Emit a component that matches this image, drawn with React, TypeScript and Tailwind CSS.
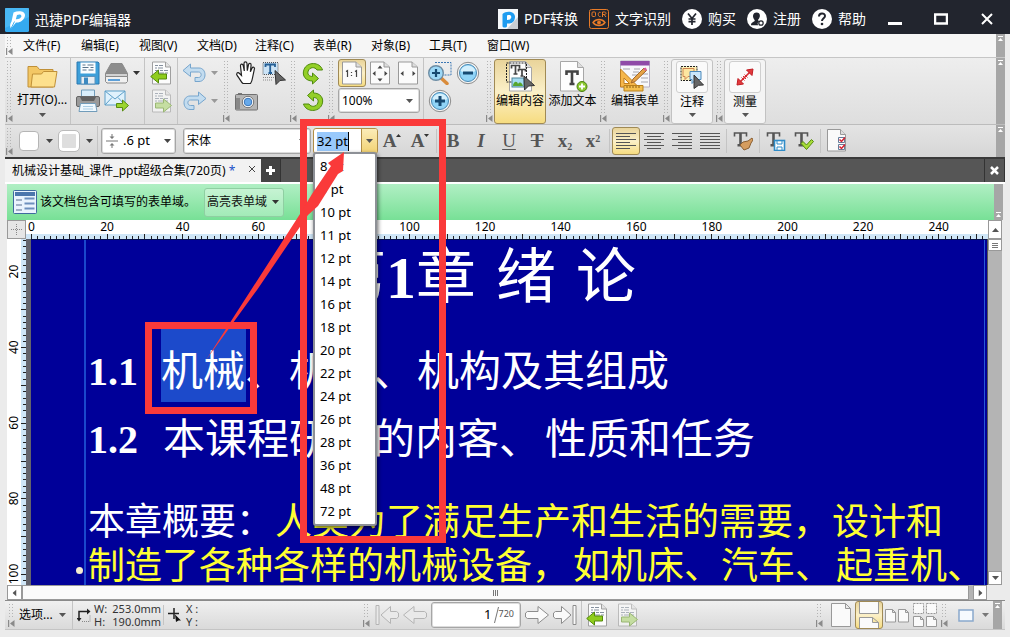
import { useState } from "react";
import type { ReactNode } from "react";
import clsx from "clsx";

const menus = ["文件(F)", "编辑(E)", "视图(V)", "文档(D)", "注释(C)", "表单(R)", "对象(B)", "工具(T)", "窗口(W)"];
const fontSizes = [8, 9, 10, 11, 12, 14, 16, 18, 20, 22, 24, 26, 28, 36, 48, 72];

const active = "border border-[#a08a55] rounded-[3px] bg-gradient-to-b from-[#e9d49a] via-[#fbf0c8] to-[#f6dc80]";
const box = "rounded-[3px] border border-[#a6a6a6] bg-white shadow-[inset_0_0_0_1px_#dcdcdc]";

/* ---------- small parts ---------- */

function Caret({ className }: { className?: string }) {
  return (
    <svg width="7" height="4" viewBox="0 0 7 4" className={clsx("shrink-0", className)}>
      <path d="M0 0h7L3.5 4z" fill="currentColor" />
    </svg>
  );
}

function Grip() {
  return (
    <div className="flex w-[9px] shrink-0 flex-col items-center self-stretch pt-0.5 text-[#8a8a8a]">
      <div className="w-[7px] flex-1 bg-[radial-gradient(#b4b4b4_1px,transparent_1px)] bg-[size:3px_3px]" />
      <svg width="7" height="7" viewBox="0 0 7 7" className="mb-0.5 mt-px shrink-0">
        <path d="M0 0h1.2v7H0zM6.5 0v7L2 3.5z" fill="currentColor" />
      </svg>
    </div>
  );
}

function Sep() {
  return <div className="w-px shrink-0 self-stretch bg-[#c4c4c4]" />;
}

function Scroller({ up = true }: { up?: boolean }) {
  return (
    <div className={clsx("flex w-[9px] shrink-0 justify-center self-stretch bg-[#a6a6a6]", up ? "items-start pt-0.5" : "items-end pb-0.5")}>
      <svg width="5" height="6" viewBox="0 0 5 6">
        <path d="M0 0h5v1H0zM0 5h5L2.5 2z" fill="#fff" />
      </svg>
    </div>
  );
}

function IconButton({ label, children, className }: { label: string; children: ReactNode; className?: string }) {
  return (
    <button aria-label={label} className={clsx("flex shrink-0 items-center justify-center", className)}>
      {children}
    </button>
  );
}

/* ---------- icons ---------- */

function LogoIcon() {
  return (
    <svg width="24" height="24" viewBox="0 0 24 24">
      <rect width="24" height="24" rx="1.5" fill="#35aaf0" />
      <path d="M0 0h24v9L0 20z" fill="#52bdf6" opacity=".7" />
      <path d="M8.500 4.500c5-2.500 12-1.500 11.500 3s-5 7.500-9 7L6 20.500c-1.500-2-1-4.500.500-7z" fill="#fff" />
      <path d="M12 7c2.500-1 4.500-.5 4.300 1.200s-2.600 3.300-5.500 3.100z" fill="#45b4f3" />
      <path d="M6 20.500l3.500-7" stroke="#45b4f3" />
    </svg>
  );
}

function ConvertIcon() {
  return (
    <svg width="20" height="20" viewBox="0 0 20 20">
      <rect width="20" height="20" fill="#f6f8fa" />
      <path d="M20 8v12H9z" fill="#c9ced4" />
      <path d="M4.500 5c4-4 13-3 12.500 3.500C16.500 14 12 15 9 14.500V17c0 2-4.500 2-4.500 0z" fill="#1f9cf0" />
      <path d="M9 6.500c2.500-1 4.500-.2 4.200 1.700S11.500 11 9 11z" fill="#fff" />
    </svg>
  );
}

function OcrIcon() {
  return (
    <svg width="20" height="20" viewBox="0 0 20 20" fill="none" stroke="#e87b28">
      <rect x=".5" y=".5" width="19" height="19" rx="2" />
      <rect x="3" y="3" width="3.500" height="4.500" rx="1" />
      <path d="M11.500 3.500c-3-1.500-3 5 0 4M13.500 8V3h2c2 0 2 2.500 0 2.500h-2 1.500L17 8" />
      <path d="M4 13.500c3-4 9-4 12 0-3 4-9 4-12 0z" strokeWidth="1.400" />
      <circle cx="10" cy="13.500" r="1.500" fill="#e87b28" />
    </svg>
  );
}

function CoinIcon() {
  return (
    <svg width="20" height="20" viewBox="0 0 20 20">
      <circle cx="10" cy="10" r="10" fill="#fff" />
      <path d="M6 4.500l4 5 4-5M10 9.500V16M6.500 10h7M6.500 12.700h7" stroke="#22252e" strokeWidth="1.700" fill="none" />
    </svg>
  );
}

function UserIcon() {
  return (
    <svg width="20" height="20" viewBox="0 0 20 20">
      <circle cx="10" cy="10" r="10" fill="#fff" />
      <path d="M9.500 3.500c4.500 0 4 5 1.700 7-.4 1 .3 1.200 1 1.700-2 1.500-1.700 2.800-1 4H4c0-3.500 3.500-3 3.800-5C5 8.500 5.500 3.500 9.500 3.500z" fill="#22252e" />
      <circle cx="14" cy="14" r="2.200" fill="#fff" stroke="#22252e" strokeWidth="1.300" />
    </svg>
  );
}

function HelpIcon() {
  return (
    <svg width="20" height="20" viewBox="0 0 20 20">
      <circle cx="10" cy="10" r="10" fill="#fff" />
      <path d="M7 7.500c0-4 6-4 6-.5 0 2.200-3 2.300-3 5" stroke="#22252e" strokeWidth="2" fill="none" />
      <circle cx="10" cy="15" r="1.300" fill="#22252e" />
    </svg>
  );
}

function FolderIcon() {
  return (
    <svg width="32" height="26" viewBox="0 0 32 26" stroke="#c09038" strokeLinejoin="round">
      <path d="M2 24V3.500h9l2.500 3H27V24z" fill="#f3c765" />
      <path d="M5 24l1.500-13h9l2-2.500H31L28.500 24z" fill="#fde08d" />
    </svg>
  );
}

function SaveIcon() {
  return (
    <svg width="24" height="24" viewBox="0 0 24 24">
      <path d="M1 1h21l1 1v21H1z" fill="#3d9fd9" stroke="#2b78b0" />
      <rect x="4.500" y="1.500" width="15" height="11" fill="#fafdff" />
      <path d="M6.500 4h3m2 0h6M6.500 6.500h6m2 0h3M6.500 9h4m2 0h5" stroke="#59748c" />
      <path d="M5 15.500h14V23H5z" fill="#e8edf2" stroke="#5e93bb" />
      <path d="M8 16.500h4V23H8z" fill="#3d89c0" />
    </svg>
  );
}

function ScannerIcon() {
  return (
    <svg width="25" height="22" viewBox="0 0 25 22" stroke="#8a8a8a">
      <path d="M7 1.500h11l5.500 10h-22z" fill="#8d8d8d" />
      <path d="M1.500 11.500h22v3h-22z" fill="#d2d2d2" />
      <path d="M1.500 14.500h22v5l-1.500 1.500H3l-1.500-1.500z" fill="#f0f0f0" />
      <path d="M4 18h12" stroke="#5c9fd8" strokeWidth="2" />
    </svg>
  );
}

function PrinterIcon() {
  return (
    <svg width="24" height="24" viewBox="0 0 24 24">
      <path d="M5.500 9V1h13v8" fill="#d9eefb" stroke="#719cba" />
      <rect x=".5" y="7.500" width="23" height="10" rx="1.500" fill="#9a9a9a" stroke="#666" />
      <path d="M4 8h16l-2 4H6z" fill="#616161" />
      <path d="M4.500 14.500h15l1.500 8H3z" fill="#eff8fe" stroke="#719cba" />
      <path d="M7 17.500h10M7 20h10" stroke="#a9cde4" />
    </svg>
  );
}

function MailIcon() {
  return (
    <svg width="25" height="22" viewBox="0 0 25 22">
      <path d="M1 1h20v14H1z" fill="#dff1fc" stroke="#5d9fc8" />
      <path d="M1 1l10 8 10-8M1 15l7-7.500M21 15l-7-7.500" fill="none" stroke="#5d9fc8" />
      <path d="M12.500 13.500h6v-3.500l6 5.500-6 5.500v-3.500h-6z" fill="#9bd52e" stroke="#568c11" />
    </svg>
  );
}

function PageArrowIcon({ forward, faded }: { forward?: boolean; faded?: boolean }) {
  return (
    <svg width="22" height="24" viewBox="0 0 22 24" className={faded ? "opacity-60" : undefined}>
      <path d="M2.500 1h13l5 5v17h-18z" fill="#fcfcfc" stroke="#a0a0a0" />
      <path d="M15.500 1v5h5" fill="#e2e2e2" stroke="#a0a0a0" />
      <path d="M5 4.500h3m1 0h4M5 7h2m1 0h5M5 9.500h4m1 0h3m1 0h4M5 12h2m1 0h6m1 0h3" stroke="#85909e" />
      {forward ? (
        <path d="M5.500 14h8v-4l8 6.500-8 6.500v-4h-8z" fill="#b3dc78" stroke="#6a9a2c" />
      ) : (
        <path d="M16.500 13h-8V9L.7 15.500 8.500 22v-4h8z" fill="#8fcc1c" stroke="#548a0c" />
      )}
    </svg>
  );
}

function UndoIcon({ redo }: { redo?: boolean }) {
  return (
    <svg width="25" height="20" viewBox="0 0 25 20" className={redo ? "-scale-x-100" : undefined}>
      <path d="M1 7.500L8.500 1v4H17c8 0 8 13.500 0 13.500h-4v-4h3.500c3.500 0 3.500-5.500 0-5.500h-8v4.500z" fill="#c3dcef" stroke="#76a5cd" strokeLinejoin="round" />
    </svg>
  );
}

function HandIcon() {
  return (
    <svg width="22" height="24" viewBox="0 0 22 24">
      <path
        d="M8 22.500c-2-1.500-3-4.500-5.500-7.500-2-2.500 0-4.500 2-2.500l2 2L5.500 5c-.3-2.200 2.300-2.500 2.700-.4L9.300 10 9 2.500C9 .3 11.800.3 12 2.500l.3 7.200 1.200-6c.4-2 2.800-1.500 2.600.4l-.7 6.600 1.700-3.700c.8-1.700 2.800-.7 2.300 1L17.500 17c-.3 2-1 4-2 5.500z"
        fill="#fff"
        stroke="#222"
        strokeWidth="1.200"
      />
    </svg>
  );
}

function SelectTextIcon() {
  return (
    <svg width="24" height="24" viewBox="0 0 24 24">
      <path d="M1 1.500h15v12H1z" fill="#cbe3f6" stroke="#555" strokeDasharray="1 1" />
      <path d="M3.500 6V3.500h9.500V6M8.200 3.500v8.500M6.500 12H10" fill="none" stroke="#245f96" strokeWidth="1.800" />
      <path d="M1 16.500h11M1 19h9" stroke="#888" strokeDasharray="1 1" />
      <path d="M13 9.500l10.500 9.500-5.500.500-4 4z" fill="#666" stroke="#333" />
    </svg>
  );
}

function CameraIcon() {
  return (
    <svg width="23" height="19" viewBox="0 0 23 19">
      <path d="M3 1h4v2H3z" fill="#777" />
      <rect x=".5" y="2.500" width="22" height="15.500" rx="1" fill="#b5b5b5" stroke="#707070" />
      <path d="M1 6h4v11H1z" fill="#888" />
      <circle cx="13" cy="10" r="5.700" fill="#fff" stroke="#777" />
      <circle cx="13" cy="10" r="3.800" fill="#67a9ea" stroke="#3774ba" />
    </svg>
  );
}

function RotateIcon({ flip }: { flip?: boolean }) {
  return (
    <svg width="22" height="24" viewBox="0 0 22 24" className={flip ? "-scale-y-100 -scale-x-100" : undefined}>
      <path
        d="M20.500 9C18 .5 5 .5 2 8.500c-2.500 6.500 2 11.500 8.500 11.500V23l6-5.500-6-5.500v3.500c-3.500 0-5.500-2.500-4.300-5.500C7.500 6 13 5.500 15 9z"
        fill="#93cf27"
        stroke="#4f8a0e"
        strokeLinejoin="round"
      />
    </svg>
  );
}

function ViewIcon({ kind }: { kind: "actual" | "page" | "width" }) {
  return (
    <svg width="20" height="24" viewBox="0 0 20 24">
      <path d="M.5 1h13.500l5.500 5v17H.5z" fill="#fbfbfb" stroke="#999" />
      <path d="M14 1v5h5.500" fill="#ddd" stroke="#999" />
      {kind === "actual" && <path d="M4 10.500l1.500-1V16M9.500 11v1m0 2v1M13 10.500l1.500-1V16" stroke="#444" strokeWidth="1.200" fill="none" />}
      {kind !== "actual" && <path d="M5.500 10v5L2.500 12.500zM14.500 10v5l3-2.500z" fill="#444" />}
      {kind === "page" && <path d="M7.500 7.500h5L10 4.500zM7.500 17.500h5L10 20.500z" fill="#444" />}
    </svg>
  );
}

function ZoomIcon({ kind }: { kind: "plus" | "minus" }) {
  return (
    <svg width="24" height="24" viewBox="0 0 24 24">
      <circle cx="12" cy="12" r="10.700" fill="#f4f4f4" stroke="#8c8c8c" />
      <circle cx="12" cy="12" r="8.500" fill="#90d4f7" stroke="#4689b5" />
      <path d="M4.500 10c2-7 13-7 15 0-4 2-11 2-15 0z" fill="#d4f0fd" />
      <path d={kind === "plus" ? "M7 12h10M12 7v10" : "M7 12h10"} stroke="#164a72" strokeWidth="3" />
    </svg>
  );
}

function MarqueeZoomIcon() {
  return (
    <svg width="24" height="24" viewBox="0 0 24 24">
      <path d="M7 1.500h16v12.500h-8" fill="none" stroke="#3d78b4" strokeDasharray="2 1" />
      <path d="M13 17l6 5.500" stroke="#d98c3c" strokeWidth="3.500" strokeLinecap="round" />
      <circle cx="8" cy="12" r="7.300" fill="#9cd8f7" stroke="#6c8ca3" strokeWidth="1.400" />
      <path d="M4 12h8M8 8v8" stroke="#164a72" strokeWidth="2.200" />
    </svg>
  );
}

function EditContentIcon() {
  return (
    <svg width="30" height="31" viewBox="0 0 30 31">
      <path d="M4.500.5h16l6 6V30h-22z" fill="#fdfdfd" stroke="#a7a7a7" />
      <path d="M20.500.5v6h6" fill="#ddd" stroke="#a7a7a7" />
      <path d="M1.500 2h20v19h-20z" fill="none" stroke="#222" strokeDasharray="2 1" />
      <path d="M6.500 7.500v-3h8v3M10.500 4.500V13M8.500 13h4M13.500 10.500v-2h7v2M17 8.500V15M15.500 15h3" fill="none" stroke="#444" strokeWidth="1.700" />
      <rect x="7" y="17" width="12" height="9" fill="#a4dcf2" stroke="#4e8398" />
      <path d="M8 25c0-4 4-6 5-2 2-3 4-1 5 2z" fill="#57a52c" />
      <path d="M19 15l10.500 9.500-6 .5-4 4z" fill="#666" stroke="#333" />
    </svg>
  );
}

function AddTextIcon() {
  return (
    <svg width="30" height="31" viewBox="0 0 30 31">
      <path d="M2.500.5h17l6 6V30h-23z" fill="#fdfdfd" stroke="#a7a7a7" />
      <path d="M19.500.5v6h6" fill="#ddd" stroke="#a7a7a7" />
      <path d="M8.500 14v-3.500h11V14M14 10.500V23M11.500 23h5" fill="none" stroke="#444" strokeWidth="2.600" />
      <circle cx="24" cy="25.500" r="5" fill="#8bc82e" stroke="#4b810f" />
      <path d="M21 25.500h6M24 22.500v6" stroke="#fff" strokeWidth="1.800" />
    </svg>
  );
}

function EditFormIcon() {
  return (
    <svg width="32" height="32" viewBox="0 0 32 32">
      <path d="M1.500 1h29v26h-29z" fill="#f7f7fb" stroke="#b7b0c4" />
      <path d="M1.500 1h29v4.500h-29z" fill="#8f4aa8" />
      <path d="M4 9h7m4 0h6M14 12h6M13 15h5M24 14h5M22 18h7M22 22h7" stroke="#a5a5ad" />
      <path d="M1.500 9v18h18z" fill="#f6b64a" stroke="#c07e20" />
      <path d="M5 18v5.500h5.500z" fill="#fff" stroke="#c07e20" />
      <path d="M5 25.500h19v5.500H5z" fill="#f4bf4e" stroke="#b9801c" />
      <path d="M8 26v2m3-2v2m3-2v2m3-2v2m3-2v2" stroke="#8c5c12" />
      <path d="M12 23l2-4L25 8l2.500 2.500L16 21.500z" fill="#e6a347" stroke="#a3682a" />
      <path d="M24 9l2.500-1.500L28 9.500 26.500 11z" fill="#e05a9c" />
    </svg>
  );
}

function CommentIcon() {
  return (
    <svg width="24" height="24" viewBox="0 0 24 24">
      <path d="M1 1.500h16v14H1z" fill="#fdf0b4" stroke="#222" strokeDasharray="2 1" />
      <path d="M3 3.500h11v8H8l-3 3v-3H3z" fill="#fde6a0" stroke="#cf8552" />
      <path d="M10 6.500h11v8h-5l-4 4v-4h-2z" fill="#cae7fb" stroke="#4c89ba" />
      <path d="M14 10l9.500 10-5 .3-4.500 3.200z" fill="#666" stroke="#333" />
    </svg>
  );
}

function MeasureIcon() {
  return (
    <svg width="20" height="20" viewBox="0 0 20 20">
      <path d="M4 16L16 4" stroke="#d8292f" strokeWidth="1.600" />
      <path d="M8 9l3 3M9.500 7.500l3 3M6.500 10.500l3 3" stroke="#d8292f" />
      <path d="M18 2l-1 6.500L11.500 3zM2 18l1-6.500L8.500 17z" fill="#e23a3c" stroke="#c11d24" />
    </svg>
  );
}

function LinesIcon({ kind }: { kind: "left" | "center" | "right" | "full" }) {
  const short = { left: "M0 4.500h14M0 10.500h14M0 16.500h14", center: "M3 4.500h14M3 10.500h14M3 16.500h14", right: "M6 4.500h14M6 10.500h14M6 16.500h14", full: "M0 4.500h20M0 10.500h20M0 16.500h20" }[kind];
  return (
    <svg width="20" height="18" viewBox="0 0 20 18" stroke="#555">
      <path d="M0 1.500h20M0 7.500h20M0 13.500h20" />
      <path d={short} />
    </svg>
  );
}

function TextToolIcon({ kind }: { kind: "brush" | "save" | "check" }) {
  return (
    <svg width="20" height="20" viewBox="0 0 20 20">
      <path d="M1.500 5.500V2h12v3.500" fill="none" stroke="#555" strokeWidth="1.600" />
      <path d="M7.500 2v12M4.500 14.300h6" fill="none" stroke="#555" strokeWidth="2.600" />
      {kind === "brush" && <path d="M19 7l-4 3-5 1-3 3 4 5 5-2 2-5 2-3z" fill="#d59d5f" stroke="#8a5e30" />}
      {kind === "save" && (
        <>
          <rect x="8.500" y="9.500" width="10" height="10" fill="#fff" stroke="#2f8cc8" strokeWidth="1.600" />
          <path d="M11 10v3h5v-3M11 19v-3h5v3" fill="none" stroke="#2f8cc8" />
        </>
      )}
      {kind === "check" && <path d="M7 12.500l2-2 3.500 3.500L17.500 8.500l2 2L12.500 18.500z" fill="#a8dc3a" stroke="#548a0c" />}
    </svg>
  );
}

function ChecklistIcon() {
  return (
    <svg width="20" height="24" viewBox="0 0 20 24">
      <path d="M.5.500h13l5 5V22H.5z" fill="#fafafa" stroke="#999" />
      <path d="M13.500.5v5h5" fill="#ddd" stroke="#999" />
      <path d="M11.500 8.500h6v5h-6zM11.500 15.500h6v5h-6z" fill="#fff" stroke="#667c9a" />
      <path d="M12.500 10.500l2 2 3.500-4M12.500 17.500l2 2 3.500-4" fill="none" stroke="#d62230" strokeWidth="1.500" />
    </svg>
  );
}

function NavArrow({ back, end }: { back?: boolean; end?: boolean }) {
  return (
    <svg width="24" height="20" viewBox="0 0 24 20" fill={back ? "#e9e9e9" : "#fafafa"} stroke={back ? "#b4b4b4" : "#8c8c8c"} strokeLinejoin="round" className={back ? "-scale-x-100" : undefined}>
      {end ? (
        <>
          <path d="M.5 8l2-1.500h6v-5L18 10l-9.500 8.500v-5h-6L.5 12z" />
          <path d="M20 .5h3v19h-3z" />
        </>
      ) : (
        <path d="M.5 8l2-1.500H13v-5L23.500 10 13 18.500v-5H2.500L.5 12z" />
      )}
    </svg>
  );
}

function LayoutIcon({ kind }: { kind: "single" | "continuous" | "facing" | "both" }) {
  const page = { fill: "#fafafa", stroke: "#999" };
  if (kind === "single")
    return (
      <svg width="20" height="24" viewBox="0 0 20 24" {...page}>
        <path d="M.5.5h14l5 5v18H.5zM14.500.5v5h5" />
      </svg>
    );
  if (kind === "continuous")
    return (
      <svg width="20" height="26" viewBox="0 0 20 26" {...page}>
        <path d="M.5 0v11.500h19V0M.5 26V15.500h13l6 5V26M13.500 15.500v5h6" />
      </svg>
    );
  return (
    <svg width="24" height="24" viewBox="0 0 24 24" {...page}>
      {kind === "facing" ? (
        <path d="M.5 6.500h7l3 3v9.500H.5zM7.500 6.500v3h3M13.500 6.500h7l3 3v9.500h-10zM20.500 6.500v3h3" />
      ) : (
        <>
          <path d="M.5.5h10v10H.5zM13.500.5h10v10h-10z" strokeDasharray="2 1" />
          <path d="M.5 13.500h7l3 3v7H.5zM7.500 13.500v3h3M13.500 13.500h7l3 3v7h-10zM20.500 13.500v3h3" />
        </>
      )}
    </svg>
  );
}

/* ---------- bars ---------- */

function TitleBar() {
  return (
    <header className="flex h-[34px] shrink-0 items-center bg-[#22252e] text-sm text-white">
      <div className="flex items-center gap-1.5 pl-[5px] pt-1.5">
        <LogoIcon />
        <h1>迅捷PDF编辑器</h1>
      </div>
      <nav className="ml-auto flex items-center gap-[11px] pr-1.5 pt-1">
        <a href="#convert" className="flex items-center gap-1.5"><ConvertIcon />PDF转换</a>
        <a href="#ocr" className="flex items-center gap-1.5"><OcrIcon />文字识别</a>
        <a href="#buy" className="flex items-center gap-1.5"><CoinIcon />购买</a>
        <a href="#register" className="flex items-center gap-1.5"><UserIcon />注册</a>
        <a href="#help" className="flex items-center gap-1.5"><HelpIcon />帮助</a>
      </nav>
      <IconButton label="最小化" className="w-[46px] pt-3">
        <svg width="14" height="3"><path d="M0 1.500h14" stroke="#fff" strokeWidth="3" /></svg>
      </IconButton>
      <IconButton label="最大化" className="w-[46px] pt-1">
        <svg width="14" height="12"><path d="M1 1.500h12v9H1z" stroke="#fff" strokeWidth="2.500" fill="none" /></svg>
      </IconButton>
      <IconButton label="关闭" className="w-[46px] pt-1">
        <svg width="12" height="12"><path d="M1 1l10 10M11 1L1 11" stroke="#fff" strokeWidth="2" /></svg>
      </IconButton>
    </header>
  );
}

function MenuBar() {
  return (
    <div className="flex h-6 shrink-0 border-b border-[#c6c6c6] bg-[#f6f6f6]">
      <Grip />
      <nav className="flex flex-1 items-center gap-[18px] pl-[9px]">
        {menus.map((m) => (
          <button key={m} className="w-10 whitespace-nowrap text-left">{m}</button>
        ))}
      </nav>
      <Scroller />
    </div>
  );
}

function MainToolbar() {
  return (
    <div className="flex h-[67px] shrink-0 border-b border-[#bcbcbc] bg-gradient-to-b from-[#eeeeee] to-[#dedede] text-[#333]">
      <Grip />
      <button className="flex w-14 flex-col items-center pt-[5px] text-black">
        <FolderIcon />
        <span className="mt-0.5 leading-[18px]">打开(O)...</span>
        <Caret className="mt-1 text-[#555]" />
      </button>
      <Sep />
      <div className="grid w-[73px] shrink-0 grid-cols-[24px_25px_7px] content-start items-center gap-1 pl-[5px] pt-[3px]">
        <IconButton label="保存"><SaveIcon /></IconButton>
        <IconButton label="扫描"><ScannerIcon /></IconButton>
        <Caret />
        <IconButton label="打印"><PrinterIcon /></IconButton>
        <IconButton label="邮件"><MailIcon /></IconButton>
      </div>
      <Sep />
      <div className="flex w-8 shrink-0 flex-col items-center gap-1 pt-[3px]">
        <IconButton label="上一视图"><PageArrowIcon /></IconButton>
        <IconButton label="下一视图"><PageArrowIcon forward faded /></IconButton>
      </div>
      <Sep />
      <div className="grid w-11 shrink-0 grid-cols-[25px_7px] content-start items-center gap-x-1 gap-y-2 pl-1 pt-[5px] text-[#999]">
        <IconButton label="撤消"><UndoIcon /></IconButton>
        <Caret />
        <IconButton label="重做"><UndoIcon redo /></IconButton>
        <Caret />
      </div>
      <Grip />
      <div className="grid w-[58px] shrink-0 grid-cols-[24px_24px] content-start items-center gap-x-1 gap-y-1 pl-[3px] pt-[3px]">
        <IconButton label="手形工具"><HandIcon /></IconButton>
        <IconButton label="选择文本"><SelectTextIcon /></IconButton>
        <IconButton label="快照" className="h-6"><CameraIcon /></IconButton>
      </div>
      <Grip />
      <div className="flex w-[29px] shrink-0 flex-col items-center gap-1 pt-[3px]">
        <IconButton label="逆时针旋转"><RotateIcon /></IconButton>
        <IconButton label="顺时针旋转"><RotateIcon flip /></IconButton>
      </div>
      <Grip />
      <div className="flex w-[87px] shrink-0 flex-col pl-0.5 pt-px">
        <div className="flex">
          <IconButton label="实际大小" className={clsx("h-7 w-7", active)}><ViewIcon kind="actual" /></IconButton>
          <IconButton label="适合页面" className="h-7 w-7"><ViewIcon kind="page" /></IconButton>
          <IconButton label="适合宽度" className="h-7 w-7"><ViewIcon kind="width" /></IconButton>
        </div>
        <div className={clsx("relative mt-px flex h-[25px] w-[82px] items-center", box)}>
          <select aria-label="缩放比例" className="w-full appearance-none bg-transparent pl-[3px] text-black outline-none">
            <option>100%</option>
          </select>
          <Caret className="pointer-events-none absolute right-1.5 text-[#555]" />
        </div>
      </div>
      <Sep />
      <div className="grid w-[61px] shrink-0 grid-cols-[24px_24px] content-start gap-1 pl-1 pt-[3px]">
        <IconButton label="放大工具"><MarqueeZoomIcon /></IconButton>
        <IconButton label="缩小"><ZoomIcon kind="minus" /></IconButton>
        <IconButton label="放大"><ZoomIcon kind="plus" /></IconButton>
      </div>
      <Grip />
      <button className={clsx("mt-px flex h-[65px] w-[52px] shrink-0 flex-col items-center whitespace-nowrap pt-px text-black", active)}>
        <EditContentIcon />
        <span className="leading-[18px]">编辑内容</span>
      </button>
      <button className="flex w-[53px] shrink-0 flex-col items-center pt-[3px] text-black">
        <AddTextIcon />
        <span className="leading-[18px]">添加文本</span>
      </button>
      <Grip />
      <button className="flex w-[54px] shrink-0 flex-col items-center pt-0.5 text-black">
        <EditFormIcon />
        <span className="leading-[18px]">编辑表单</span>
      </button>
      <Grip />
      {[
        { label: "注释", icon: <CommentIcon /> },
        { label: "测量", icon: <MeasureIcon /> },
      ].map((item, i) => (
        <div key={item.label} className="flex shrink-0">
          {i > 0 && <div className="flex pl-0.5"><Grip /></div>}
          <button className="mt-px flex h-[65px] w-[42px] flex-col items-center rounded-[3px] border border-[#c2c2c2] bg-[#f4f4f4] pt-px text-black">
            <span className="flex h-8 w-8 items-center justify-center rounded-[3px] border border-[#cfcfcf] bg-[#fafafa]">{item.icon}</span>
            <span className="leading-[18px]">{item.label}</span>
            <Caret className="mt-0.5 text-[#555]" />
          </button>
        </div>
      ))}
      <div className="flex-1" />
      <Scroller />
    </div>
  );
}

function SizeBox() {
  const [size, setSize] = useState("32 pt");
  return (
    <div className="relative ml-0.5 h-[26px] w-[65px] shrink-0 text-black">
      <div className="flex h-full items-center overflow-hidden rounded-[3px] border border-[#b08d45] bg-white pl-[3px]">
        <input
          aria-label="字号"
          value={size}
          onChange={(e) => setSize(e.target.value)}
          className="h-[19px] w-8 border-r border-black bg-[#99c9fb] text-[13px] outline-none"
        />
        <button aria-label="展开字号" className="ml-auto flex h-full w-4 items-center justify-center border-l border-[#b08d45] bg-gradient-to-b from-[#fbecb8] to-[#f2d272] text-[#555]">
          <Caret />
        </button>
      </div>
      <ul role="listbox" aria-label="字号列表" className="absolute left-0 top-6 z-10 w-16 rounded-[3px] border-2 border-[#8d9096] bg-white py-px pl-[5px] text-[13px] shadow-[1px_2px_4px_rgba(0,0,0,0.6)]">
        {fontSizes.map((s) => (
          <li key={s} role="option" aria-selected={size === `${s} pt`} onClick={() => setSize(`${s} pt`)} className="h-[23px] leading-[23px]">
            {s} pt
          </li>
        ))}
      </ul>
    </div>
  );
}

function FormatToolbar() {
  const glyph = "w-7 font-['Liberation_Serif'] text-[19px] leading-5 text-[#555]";
  return (
    <div className="flex h-8 shrink-0 bg-gradient-to-b from-[#e4e4e4] to-[#d6d6d6] text-[#444]">
      <Grip />
      <div className="flex flex-1 items-center">
        <button aria-label="填充颜色" className="ml-[5px] flex items-center gap-[7px]">
          <span className="h-5 w-5 rounded-sm border border-[#b5b5b5] bg-white" />
          <Caret />
        </button>
        <button aria-label="描边颜色" className="ml-1.5 flex items-center gap-[7px]">
          <span className="h-5 w-5 rounded-sm border-3 border-white bg-[#dedede] outline outline-[#bbb]" />
          <Caret />
        </button>
        <div className="ml-1 flex h-full py-px"><Sep /></div>
        <div className={clsx("relative ml-[3px] flex h-[26px] w-[75px] shrink-0 items-center", box)}>
          <svg width="12" height="14" viewBox="0 0 12 14" className="pointer-events-none absolute left-1" fill="#777">
            <path d="M0 6.500h12v1H0zM5.500 0h1v2.500h2L6 5 3.500 2.500h2zM5.500 14h1v-2.500h2L6 9l-2.500 2.500h2z" />
          </svg>
          <select aria-label="线宽" className="w-full appearance-none bg-transparent pl-[21px] text-[13px] text-black outline-none">
            <option>.6 pt</option>
          </select>
          <Caret className="pointer-events-none absolute right-1" />
        </div>
        <div className={clsx("relative ml-[7px] flex h-[26px] w-32 shrink-0 items-center", box)}>
          <select aria-label="字体" className="w-full appearance-none bg-transparent pl-[3px] text-black outline-none">
            <option>宋体</option>
          </select>
          <Caret className="pointer-events-none absolute right-1" />
        </div>
        <SizeBox />
        <button aria-label="增大字号" className={clsx(glyph, "flex items-center justify-center font-bold")}>
          A<svg width="5" height="3" className="mb-3"><path d="M0 3h5L2.500 0z" fill="#333" /></svg>
        </button>
        <button aria-label="减小字号" className={clsx(glyph, "flex items-center justify-center font-bold")}>
          A<svg width="5" height="3" className="mb-3"><path d="M0 0h5L2.500 3z" fill="#333" /></svg>
        </button>
        <div className="flex h-full px-0.5 py-1"><Sep /></div>
        <button className={clsx(glyph, "font-bold")}>B</button>
        <button className={clsx(glyph, "font-bold italic")}>I</button>
        <button className={clsx(glyph, "underline underline-offset-2")}>U</button>
        <button className={clsx(glyph, "font-bold line-through")}>T</button>
        <button className={clsx(glyph, "font-bold")}>x<sub className="text-[10px]">2</sub></button>
        <button className={clsx(glyph, "font-bold")}>x<sup className="text-[10px]">2</sup></button>
        <div className="flex h-full px-0.5 py-1"><Sep /></div>
        <IconButton label="左对齐" className={clsx("h-7 w-7", active)}><LinesIcon kind="left" /></IconButton>
        <IconButton label="居中" className="w-7"><LinesIcon kind="center" /></IconButton>
        <IconButton label="右对齐" className="w-7"><LinesIcon kind="right" /></IconButton>
        <IconButton label="两端对齐" className="w-7"><LinesIcon kind="full" /></IconButton>
        <div className="flex h-full px-0.5 py-1"><Sep /></div>
        <IconButton label="格式刷" className="w-7"><TextToolIcon kind="brush" /></IconButton>
        <div className="flex h-full px-0.5 py-1"><Sep /></div>
        <IconButton label="保存样式" className="w-7"><TextToolIcon kind="save" /></IconButton>
        <IconButton label="应用样式" className="w-7"><TextToolIcon kind="check" /></IconButton>
        <div className="flex h-full px-0.5 py-1"><Sep /></div>
        <IconButton label="属性" className="w-7"><ChecklistIcon /></IconButton>
      </div>
      <Scroller />
    </div>
  );
}

function TabBar() {
  return (
    <div className="flex h-[25px] shrink-0 border-t-2 border-[#3a3a3a] bg-[#565656]">
      <div className="flex w-64 shrink-0 items-center whitespace-nowrap bg-[#f2f2f2] pl-[7px]">
        <span>机械设计基础_课件_ppt超级合集(720页) <span className="text-[#1a50c8]">*</span></span>
        <button aria-label="关闭标签" className="ml-auto mr-1.5 mb-1">
          <svg width="6" height="6" stroke="#444"><path d="M0 0l6 6M6 0L0 6" /></svg>
        </button>
      </div>
      <IconButton label="新建标签" className="w-5 border-r border-[#333] bg-[#444]">
        <svg width="9" height="9" stroke="#fff" strokeWidth="3"><path d="M0 4.500h9M4.500 0v9" /></svg>
      </IconButton>
      <IconButton label="关闭文档" className="ml-auto w-[21px] border-x border-[#333]">
        <svg width="9" height="9" stroke="#fff" strokeWidth="2.500"><path d="M1 1l7 7M8 1L1 8" /></svg>
      </IconButton>
    </div>
  );
}

function FormNotice() {
  return (
    <div className="flex h-[38px] shrink-0 border-t-2 border-white pl-0.5 pr-0.5">
      <div className="flex flex-1 items-center bg-gradient-to-b from-[#b0efc4] to-[#77e096] pl-1.5">
        <svg width="24" height="24" viewBox="0 0 24 24">
          <rect x=".5" y=".5" width="23" height="23" rx="1" fill="#eaf3fd" stroke="#3f6a9e" />
          <path d="M2 2h20v4H2z" fill="#4c76ac" />
          <path d="M3 10h6M3 15h6M3 20h6" stroke="#586f90" />
          <path d="M11.500 8.500h10M11.500 13.500h10M11.500 18.500h10" stroke="#6d8fbd" strokeWidth="2" />
        </svg>
        <p className="ml-[3px] w-[161px] whitespace-nowrap">该文档包含可填写的表单域。</p>
        <button className="ml-[3px] flex h-[29px] w-20 items-center justify-between whitespace-nowrap rounded-[3px] border border-[#8fcfa2] bg-gradient-to-b from-[#c6f3d3] to-[#a2ebb8] pl-0.5 pr-1 text-[#111]">
          高亮表单域
          <Caret className="text-[#333]" />
        </button>
      </div>
      <Scroller up={false} />
    </div>
  );
}

const UNIT = 75.6; // twenty millimetres on screen

function TopRuler() {
  // the page is 253 mm wide
  const ticks = Array.from({ length: 152 }, (_, i) => i);
  return (
    <div className="flex h-[19px] shrink-0 pl-0.5">
      <div className="flex w-[19px] items-center justify-center border border-[#999] bg-[#e6e6e6]">
        <svg width="11" height="11" stroke="#888" strokeDasharray="1 1"><path d="M0 5.500h11M5.500 0v11" /></svg>
      </div>
      <svg className="h-[19px] min-w-0 flex-1 overflow-visible bg-white" fontSize="12" textAnchor="middle">
        <rect y="14" width="100%" height="5" fill="#cfe6f7" />
        {ticks.map((i) => (
          <path key={i} d={`M${Math.round(5 + (i * UNIT) / 12) + 0.5} ${i % 6 ? 16 : 14}V19`} stroke="#222" />
        ))}
        {ticks.slice(0, 13).map((i) => (
          <text key={i} x={5.5 + i * UNIT} y="11">{i * 20}</text>
        ))}
      </svg>
      <div className="mr-[3px] flex w-[14px] items-center justify-center border border-[#999] bg-white text-[#555]">
        <Caret className="rotate-180" />
      </div>
    </div>
  );
}

function SideRuler() {
  const ticks = Array.from({ length: 115 }, (_, i) => i);
  return (
    <svg className="h-full w-[19px] shrink-0 bg-white" fontSize="12" textAnchor="middle">
      <rect x="14" width="5" height="100%" fill="#cfe6f7" />
      {ticks.map((i) => (
        <path key={i} d={`M${i % 6 ? 16 : 14} ${Math.round((i * UNIT) / 12 - 43) + 0.5}H19`} stroke="#222" />
      ))}
      {ticks.slice(1, 6).map((i) => (
        <text key={i} transform={`translate(11 ${i * UNIT - 43}) rotate(-90)`}>{i * 20}</text>
      ))}
    </svg>
  );
}

function Page() {
  return (
    <main className="relative min-w-0 flex-1 overflow-hidden border-t border-[#06104a] bg-[#000099] font-['Liberation_Serif','Noto_Sans_CJK_SC',serif] text-white">
      <div className="absolute inset-y-0 left-[53px] w-0.5 bg-[#1a48cc]" />
      <div className="absolute inset-y-0 right-0.5 w-px bg-[#2858d8]" />
      <div className="absolute left-[45px] top-[327px] h-[7px] w-[7px] rounded-sm bg-[#f5ecd0]" />
      <div className="relative whitespace-nowrap pl-[57px]">
        <h2 className="flex gap-5 pl-[238px] text-[60px] leading-[76px]">
          <span>第<b>1</b>章</span>
          <span>绪</span>
          <span>论</span>
        </h2>
        <p className="mt-[22px] flex gap-0.5 text-[42px] leading-[68px]">
          <b className="w-[71px] text-[40px]">1.1</b>
          <span className="relative">
            <span className="absolute left-0 -top-2.5 h-[74px] w-[85px] bg-[#1c4acb]" />
            <span className="relative">机械、</span>
          </span>
          <span>机器、</span>
          <span>机构及其组成</span>
        </p>
        <p className="flex gap-1 text-[42px] leading-[68px]">
          <b className="w-[71px] text-[40px]">1.2</b>
          <span>本课程研究的内客、</span>
          <span>性质和任务</span>
        </p>
        <div className="mt-[27px] text-[37px] leading-[44px] text-[#ffff33]">
          <p className="flex gap-0.5">
            <span className="text-white">本章概要：</span>
            <span>人类为了满足生产和生活的需要，</span>
            <span>设计和</span>
          </p>
          <p className="flex gap-1">
            <span>制造了各种各样的机械设备，</span>
            <span>如机床、汽车、</span>
            <span>起重机、</span>
          </p>
        </div>
      </div>
    </main>
  );
}

function Workspace() {
  return (
    <div className="flex min-h-0 flex-1 pl-0.5 pr-[3px]">
      <SideRuler />
      <div className="w-[5px] shrink-0 bg-[#63636b]" />
      <Page />
      <div className="flex w-[15px] shrink-0 flex-col border-l border-[#555] bg-[#b4b4b4]">
        <div className="flex h-3 flex-col items-center justify-center gap-px border border-[#999] bg-white">
          <span className="h-px w-1.5 bg-[#777]" />
          <span className="h-px w-1.5 bg-[#777]" />
          <span className="h-px w-1.5 bg-[#777]" />
        </div>
        <IconButton label="向下滚动" className="mt-auto h-[14px] border border-[#999] bg-white text-[#555]"><Caret /></IconButton>
      </div>
    </div>
  );
}

function BottomScroll() {
  return (
    <div className="flex h-4 shrink-0 border-b border-[#8a8a8a] pl-0.5 pr-[18px]">
      <IconButton label="向左滚动" className="w-[15px] border border-[#999] bg-white text-[#555]"><Caret className="rotate-90" /></IconButton>
      <div className="flex flex-1 items-center justify-center gap-px border border-[#999] bg-[#fafafa]">
        <span className="h-1.5 w-px bg-[#777]" />
        <span className="h-1.5 w-px bg-[#777]" />
        <span className="h-1.5 w-px bg-[#777]" />
      </div>
      <div className="w-1 bg-[#b4b4b4]" />
      <IconButton label="向右滚动" className="w-[14px] border border-[#999] bg-white text-[#555]"><Caret className="-rotate-90" /></IconButton>
    </div>
  );
}

function StatusBar() {
  return (
    <footer className="mb-[7px] flex h-[29px] shrink-0 items-center border-b border-[#c4c4c4] bg-gradient-to-b from-[#f0f0f0] to-[#dadada] pl-0.5 pr-[3px] text-[#333]">
      <Grip />
      <button className="flex w-14 items-center justify-between pl-[3px] pr-1.5 text-black">
        选项...
        <Caret className="text-[#555]" />
      </button>
      <Sep />
      <svg width="14" height="14" viewBox="0 0 14 14" className="ml-1" fill="none" stroke="#222">
        <path d="M2 11V3.500h8" strokeWidth="1.500" />
        <path d="M10 .5v6l3.500-3zM-.5 10h5L2 13.500z" fill="#222" stroke="none" />
        <path d="M5 13.500h8V7" strokeDasharray="1 1" stroke="#888" />
      </svg>
      <div className="ml-[3px] grid w-[67px] grid-cols-[16px_1fr] whitespace-nowrap text-[11px] leading-[13px]">
        <span>W:</span>
        <span className="text-right">253.0mm</span>
        <span>H:</span>
        <span className="text-right">190.0mm</span>
      </div>
      <div className="ml-0.5 flex h-full py-1"><Sep /></div>
      <svg width="14" height="14" viewBox="0 0 14 14" className="ml-1">
        <path d="M6 0v11M0 5.500h11" stroke="#222" strokeWidth="1.500" />
        <path d="M7 6.500l6 6-2.500 0L8 14z" fill="#111" />
      </svg>
      <div className="ml-1 w-4 text-[11px] leading-[13px]">
        <div>X :</div>
        <div>Y :</div>
      </div>

      <div className="flex-1" />
      <div className="flex h-full items-center gap-1 pr-[18px]">
        <Grip />
        <IconButton label="首页"><NavArrow back end /></IconButton>
        <IconButton label="上一页"><NavArrow back /></IconButton>
        <label className={clsx("flex h-[26px] w-[90px] items-center pr-1", box)}>
          <input aria-label="页码" defaultValue="1" className="w-[60px] bg-transparent text-right text-[13px] text-black outline-none" />
          <svg width="5" height="18" className="ml-0.5 shrink-0"><path d="M.5 17l4-16" stroke="#777" /></svg>
          <span className="mb-0.5 text-[9px] text-[#555]">720</span>
        </label>
        <IconButton label="下一页"><NavArrow /></IconButton>
        <IconButton label="末页"><NavArrow end /></IconButton>
        <Sep />
        <IconButton label="后退"><PageArrowIcon /></IconButton>
        <IconButton label="前进" className="ml-1"><PageArrowIcon forward faded /></IconButton>
      </div>
      <div className="flex-1" />

      <Grip />
      <IconButton label="单页" className="ml-[3px] w-7"><LayoutIcon kind="single" /></IconButton>
      <IconButton label="连续" className={clsx("h-7 w-7", active)}><LayoutIcon kind="continuous" /></IconButton>
      <IconButton label="对开" className="w-7"><LayoutIcon kind="facing" /></IconButton>
      <IconButton label="连续对开" className="w-7"><LayoutIcon kind="both" /></IconButton>
      <div className="flex h-full px-px"><Grip /></div>
      <button aria-label="窗口布局" className="flex w-[43px] items-center justify-between pl-2 pr-1 text-[#777]">
        <svg width="16" height="13"><rect x="1" y="1" width="14" height="11" fill="#f6fafe" stroke="#89a8cc" strokeWidth="1.500" /></svg>
        <Caret />
      </button>
      <Scroller />
    </footer>
  );
}

export default function App() {
  return (
    <div className="relative flex h-screen flex-col overflow-hidden bg-[#ebebeb] font-['Noto_Sans','Noto_Sans_CJK_SC',sans-serif] text-xs text-black">
      <TitleBar />
      <div className="flex min-h-0 flex-1 flex-col px-[5px]">
        <MenuBar />
        <MainToolbar />
        <FormatToolbar />
        <TabBar />
        <FormNotice />
        <TopRuler />
        <Workspace />
        <BottomScroll />
        <StatusBar />
      </div>

      {/* red callouts drawn over the window */}
      <div className="pointer-events-none absolute left-[300px] top-[119px] z-20 h-[424px] w-[146px] border-7 border-[#fa3a3a]" />
      <div className="pointer-events-none absolute left-[145px] top-[322px] z-20 h-[92px] w-28 border-7 border-[#fa3a3a]" />
      <svg className="pointer-events-none absolute left-[200px] top-[150px] z-20" width="150" height="215" viewBox="0 0 150 215">
        <path d="M6 210L100 64l12-20 19-28-3-3L144 2l-1 19-5 3-20 32-10 9-51 75z" fill="#fa3a3a" />
      </svg>
    </div>
  );
}
